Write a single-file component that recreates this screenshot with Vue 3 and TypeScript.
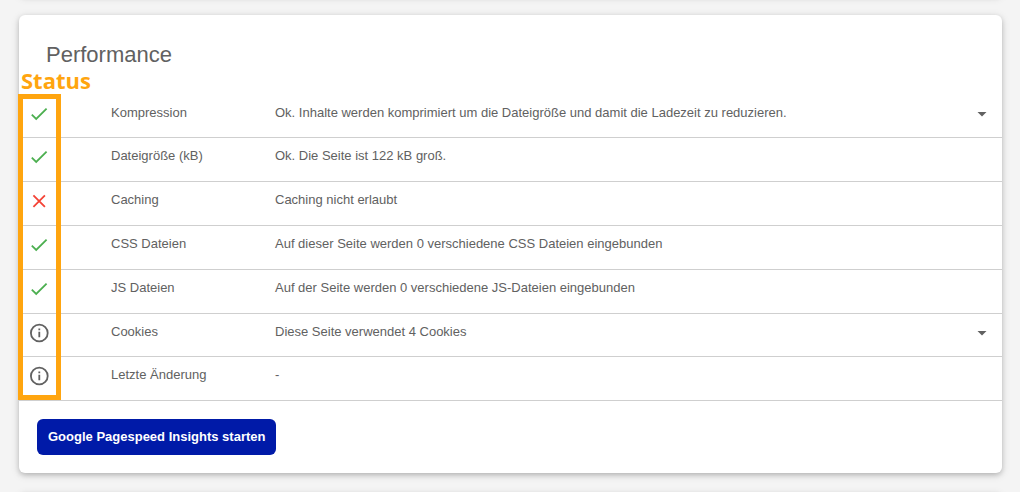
<script setup lang="ts">
import { ref } from 'vue'

type Status = 'ok' | 'error' | 'info'

interface Check {
  name: string
  result: string
  status: Status
  expandable?: boolean
}

const checks: Check[] = [
  {
    name: 'Kompression',
    result: 'Ok. Inhalte werden komprimiert um die Dateigröße und damit die Ladezeit zu reduzieren.',
    status: 'ok',
    expandable: true,
  },
  { name: 'Dateigröße (kB)', result: 'Ok. Die Seite ist 122 kB groß.', status: 'ok' },
  { name: 'Caching', result: 'Caching nicht erlaubt', status: 'error' },
  { name: 'CSS Dateien', result: 'Auf dieser Seite werden 0 verschiedene CSS Dateien eingebunden', status: 'ok' },
  { name: 'JS Dateien', result: 'Auf der Seite werden 0 verschiedene JS-Dateien eingebunden', status: 'ok' },
  { name: 'Cookies', result: 'Diese Seite verwendet 4 Cookies', status: 'info', expandable: true },
  { name: 'Letzte Änderung', result: '-', status: 'info' },
]

const open = ref<string | null>(null)

function toggle(name: string): void {
  open.value = open.value === name ? null : name
}
</script>

<template>
  <main class="page">
    <div class="card card-previous"></div>

    <section class="card" aria-labelledby="performance-title">
      <h2 id="performance-title" class="title">Performance</h2>

      <div class="checks">
        <table class="table" aria-labelledby="performance-title">
          <colgroup>
            <col class="col-status" />
            <col class="col-name" />
            <col />
            <col class="col-toggle" />
          </colgroup>
          <tbody>
            <tr v-for="check in checks" :key="check.name" :class="{ expandable: check.expandable }">
              <td class="status">
                <svg v-if="check.status === 'ok'" class="icon ok" viewBox="0 0 20 20" aria-hidden="true">
                  <path d="M2.8 10.6 7.2 15 17.6 4.6" />
                </svg>
                <svg v-else-if="check.status === 'error'" class="icon error" viewBox="0 0 20 20" aria-hidden="true">
                  <path d="M4.4 4.4 15.9 15.9M15.9 4.4 4.4 15.9" />
                </svg>
                <svg v-else class="icon info" viewBox="0 0 20 20" aria-hidden="true">
                  <circle cx="10.3" cy="10" r="8.4" />
                  <path d="M10.3 8.8v5.4M10.3 5.4v1.8" />
                </svg>
              </td>
              <th scope="row" class="name">{{ check.name }}</th>
              <td class="result">{{ check.result }}</td>
              <td class="toggle-cell">
                <button
                  v-if="check.expandable"
                  type="button"
                  class="toggle"
                  :aria-label="check.name"
                  :aria-expanded="open === check.name"
                  @click="toggle(check.name)"
                >
                  <svg class="caret" viewBox="0 0 10 5" aria-hidden="true"><path d="M.5 0h9L5 4.6z" /></svg>
                </button>
              </td>
            </tr>
          </tbody>
        </table>
        <div class="marker"></div>
        <span class="marker-label">Status</span>
      </div>

      <button type="button" class="start">Google Pagespeed Insights starten</button>
    </section>

    <div class="card card-next"></div>
  </main>
</template>

<style>
body {
  margin: 0;
  background: #f4f4f4;
}
</style>

<style scoped>
.page {
  box-sizing: border-box;
  display: flex;
  flex-direction: column;
  gap: 20px;
  height: 100vh;
  padding: 0 18px 0 19px;
  overflow: hidden;
  background: #f4f4f4;
  color: #616161;
  font-family: Arial, "Liberation Sans", sans-serif;
  font-size: 13px;
}

.card {
  flex: none;
  border-radius: 6px;
  background: #fff;
  box-shadow: 0 2px 5px rgba(0, 0, 0, 0.18), 0 2px 10px rgba(0, 0, 0, 0.12);
}

.card-previous {
  height: 40px;
  margin-top: -45px;
}

.card-next {
  height: 40px;
}

.title {
  margin: 0;
  padding: 24px 27px;
  font-size: 22px;
  font-weight: 400;
  line-height: 32px;
}

.checks {
  position: relative;
}

.table {
  width: 100%;
  table-layout: fixed;
  border-collapse: separate;
  border-spacing: 0;
}

.col-status {
  width: 92px;
}

.col-name {
  width: 164px;
}

.col-toggle {
  width: 40px;
}

.table td,
.table th {
  box-sizing: border-box;
  height: 44px;
  padding: 8px 0 0;
  border-bottom: 1px solid #cfcfcf;
  font-weight: 400;
  line-height: 20px;
  text-align: left;
  vertical-align: top;
}

.table .expandable td,
.table .expandable th {
  height: 43px;
}

.table .status,
.table .toggle-cell {
  padding-top: 9px;
}

.table .status {
  padding-left: 10px;
}

.icon {
  display: block;
  width: 20px;
  height: 20px;
  fill: none;
  stroke-width: 1.8;
}

.ok {
  stroke: #4caf50;
}

.error {
  stroke: #f44336;
}

.info {
  stroke: #616161;
}

.toggle {
  display: flex;
  align-items: center;
  justify-content: center;
  width: 40px;
  height: 20px;
  padding: 0;
  border: 0;
  background: none;
  color: inherit;
  cursor: pointer;
}

.caret {
  width: 10px;
  height: 5px;
  fill: currentColor;
}

.marker {
  position: absolute;
  top: -1px;
  bottom: 1px;
  left: -1px;
  box-sizing: border-box;
  width: 43px;
  border: 5px solid #ffa50f;
  pointer-events: none;
}

.marker-label {
  position: absolute;
  bottom: 100%;
  left: 2px;
  color: #ffa50f;
  font-family: "Segoe UI", "Open Sans", "Noto Sans", sans-serif;
  font-size: 22px;
  font-weight: 700;
  line-height: 30px;
}

.start {
  display: block;
  height: 36px;
  margin: 18px;
  padding: 0 11px 1px;
  border: 0;
  border-radius: 6px;
  background: #001aa8;
  color: #fff;
  font: inherit;
  font-weight: 700;
  cursor: pointer;
}
</style>
